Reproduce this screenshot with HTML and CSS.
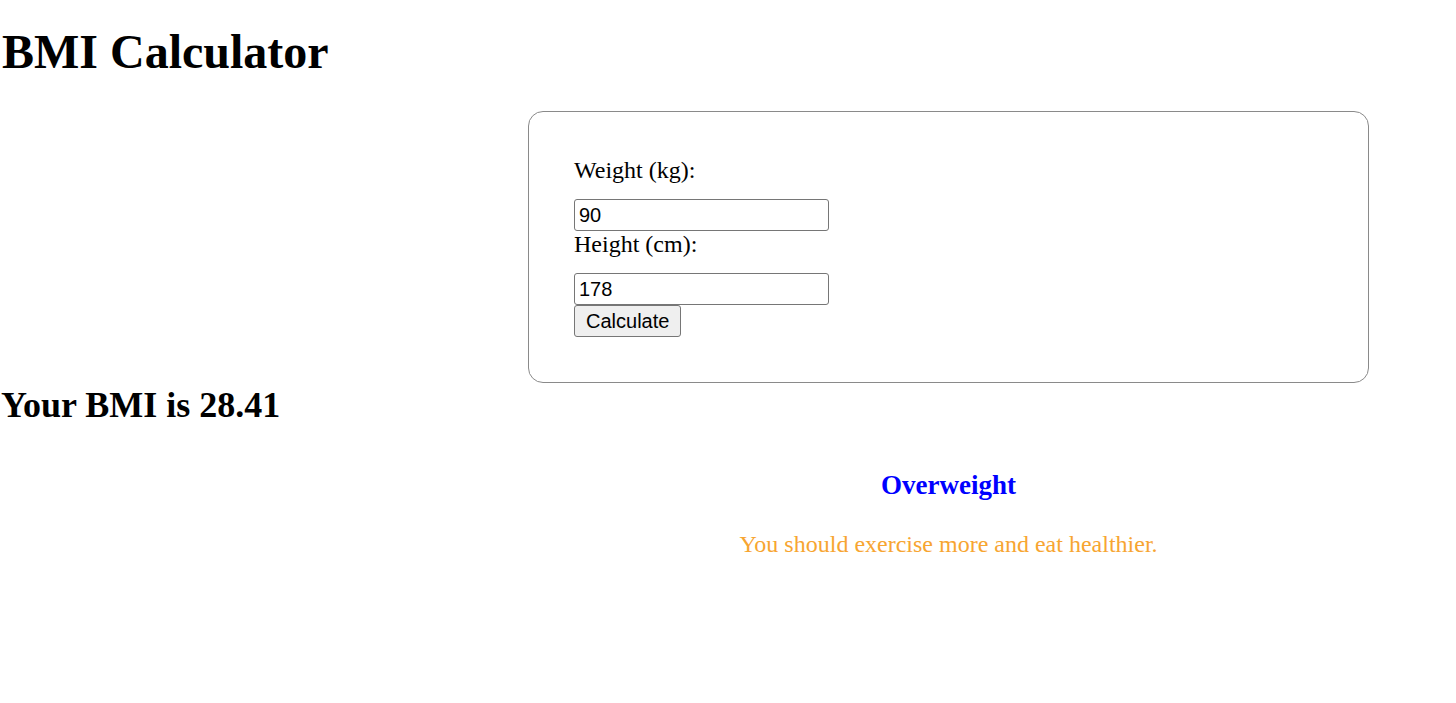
FILE: index.html
```html
<!DOCTYPE html>
<html>
<head>
<meta charset="utf-8">
<title>BMI Calculator</title>
<link rel="stylesheet" href="styles.css">
</head>
<body>
<h1 class="title">BMI Calculator</h1>
<div class="panel">
  <form class="calc-form">
    <label class="field-label" for="weight">Weight (kg):</label>
    <input class="field-input" id="weight" type="text" value="90">
    <label class="field-label" for="height">Height (cm):</label>
    <input class="field-input" id="height" type="text" value="178">
    <button class="calc-btn" type="button">Calculate</button>
  </form>
</div>
<h2 class="bmi-value">Your BMI is 28.41</h2>
<div class="result">
  <h3 class="category">Overweight</h3>
  <p class="advice">You should exercise more and eat healthier.</p>
</div>
</body>
</html>
```

FILE: styles.css
```css
html, body {
  margin: 0;
  padding: 0;
  background: #ffffff;
}
body {
  font-family: "Liberation Serif", "Times New Roman", serif;
  color: #000000;
}
.title {
  font-size: 48px;
  font-weight: bold;
  margin: 24px 0 32px 2px;
  line-height: 55px;
}
.panel {
  margin: 0 0 0 528px;
  width: 841px;
  box-sizing: border-box;
  border: 1px solid #8a8a8a;
  border-radius: 15px;
  padding: 45px;
}
.calc-form {
  display: flex;
  flex-direction: column;
  align-items: flex-start;
}
.field-label {
  display: block;
  font-size: 24px;
  line-height: 27px;
  margin-bottom: 15px;
}
.field-input {
  display: block;
  box-sizing: border-box;
  width: 255px;
  height: 32px;
  margin: 0;
  border: 1px solid #767676;
  border-radius: 3px;
  padding: 0 4px;
  font-family: "Liberation Sans", Arial, sans-serif;
  font-size: 20px;
  color: #000000;
  background: #ffffff;
}
.calc-btn {
  box-sizing: border-box;
  height: 32px;
  margin: 0;
  padding: 0 11px;
  border: 1px solid #767676;
  border-radius: 3px;
  background: #efefef;
  font-family: "Liberation Sans", Arial, sans-serif;
  font-size: 20px;
  color: #000000;
}
.bmi-value {
  font-size: 36px;
  font-weight: bold;
  margin: 1px 0 0 1px;
  line-height: 42px;
}
.result {
  margin-left: 528px;
  width: 841px;
  text-align: center;
}
.category {
  color: #0000ff;
  font-size: 27px;
  font-weight: bold;
  margin: 43px 0 0 0;
  line-height: 32px;
}
.advice {
  color: #f7a531;
  font-size: 24px;
  margin: 29px 0 0 0;
  line-height: 28px;
}
```
